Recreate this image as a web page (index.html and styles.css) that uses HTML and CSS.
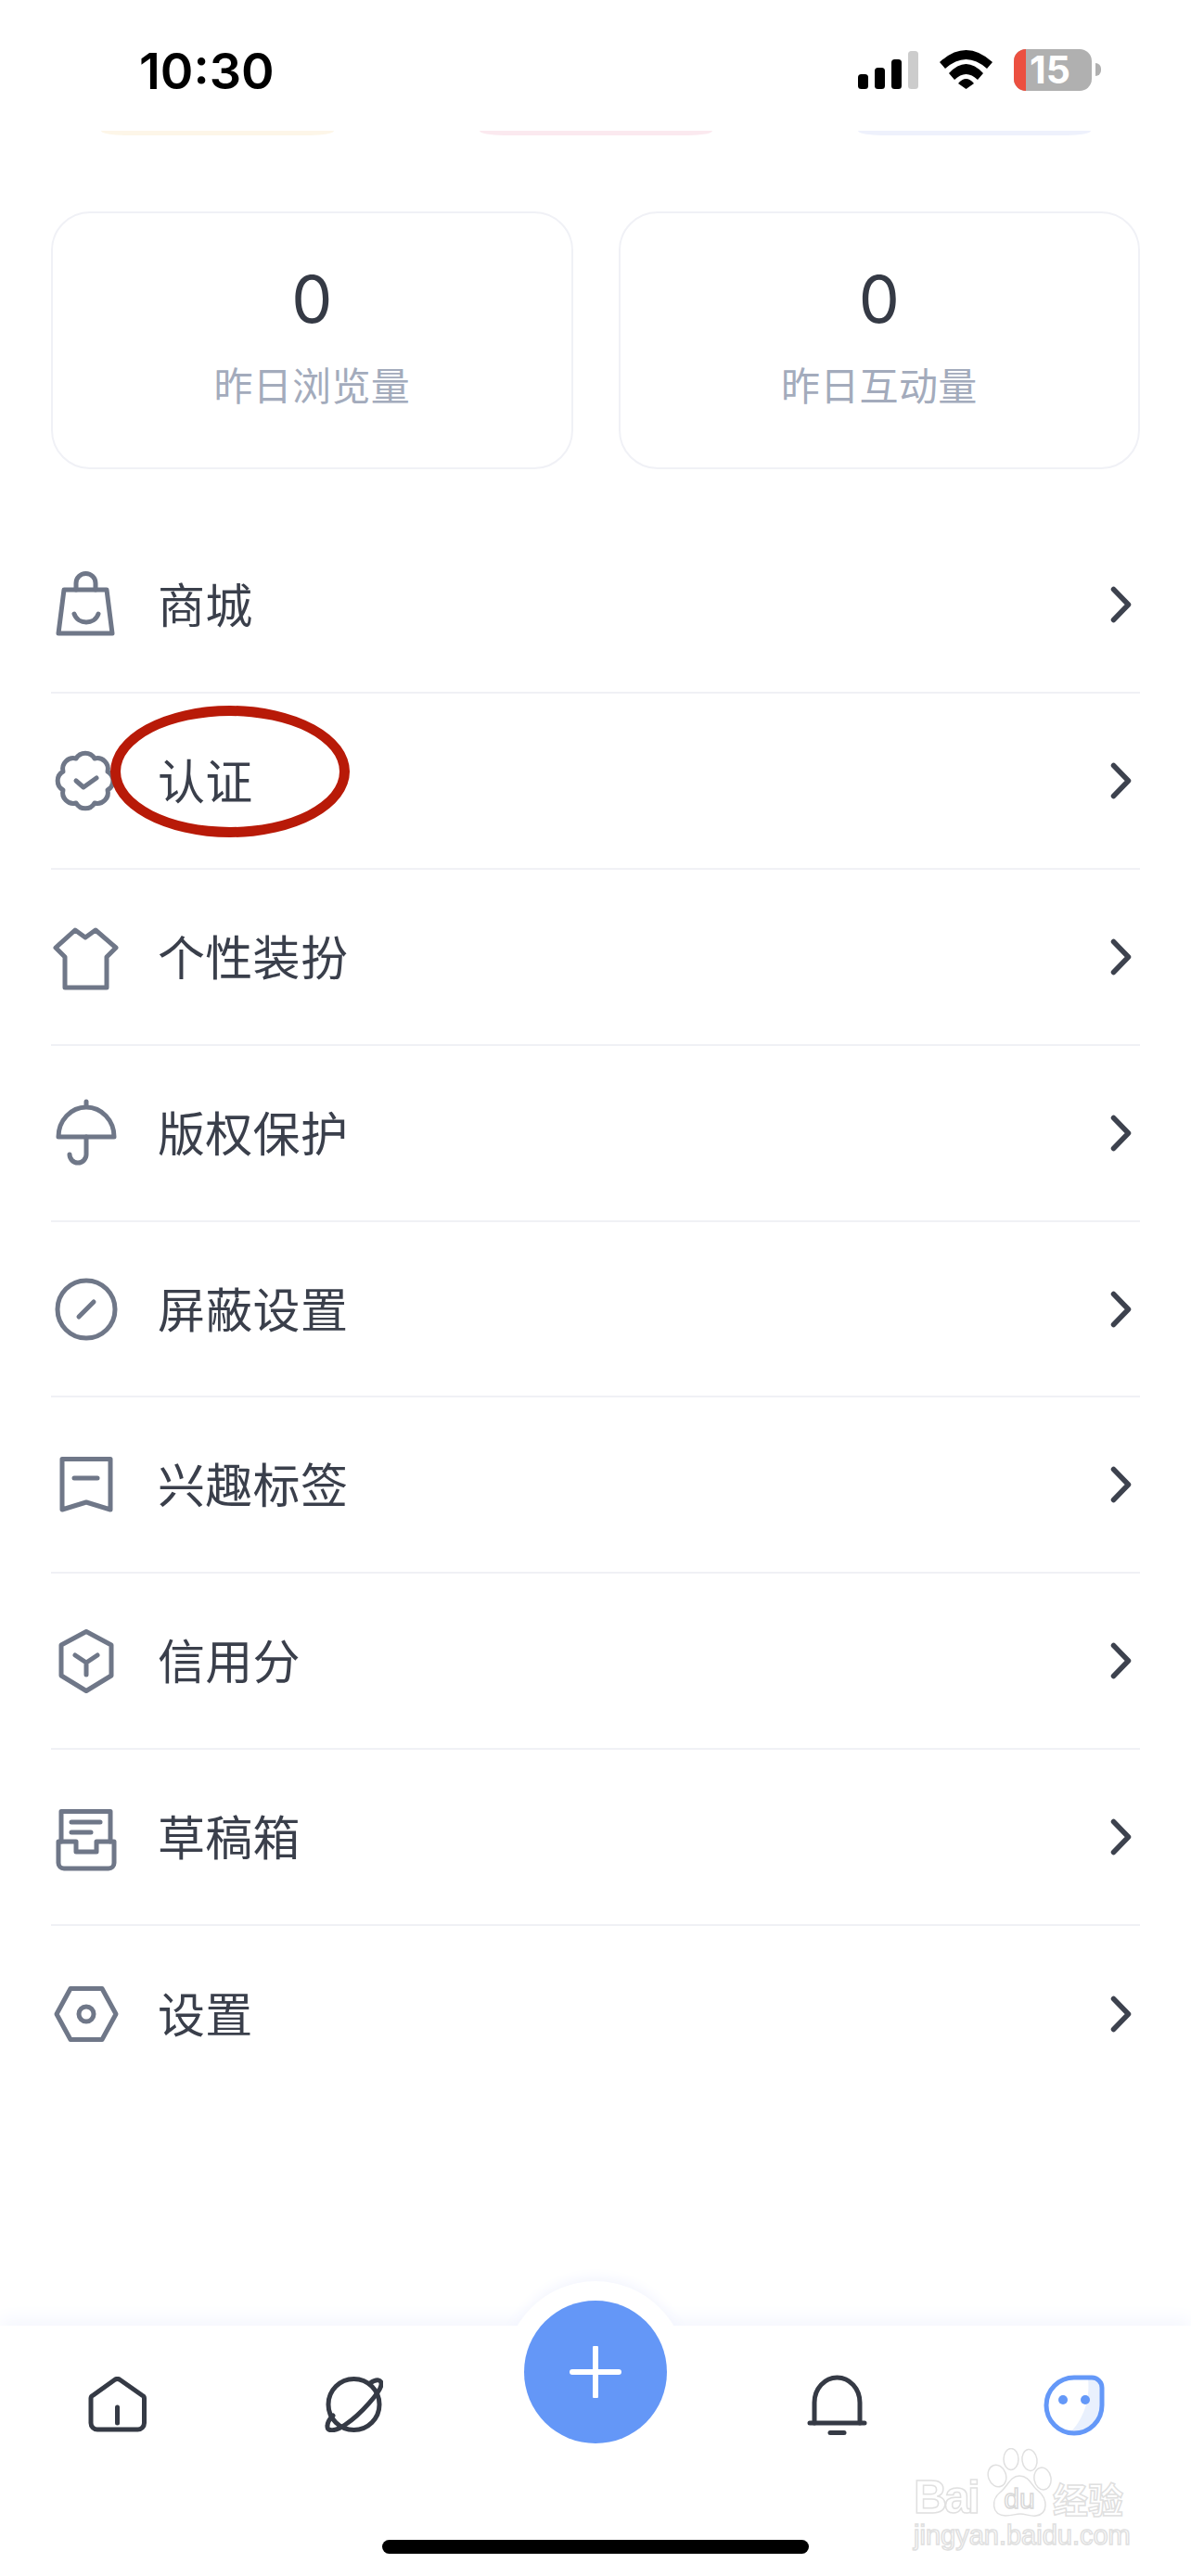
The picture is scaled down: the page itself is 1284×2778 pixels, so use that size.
FILE: index.html
```html
<!DOCTYPE html>
<html lang="zh-CN">
<head>
<meta charset="utf-8">
<title>我的</title>
<link rel="stylesheet" href="styles.css">
</head>
<body>
<div class="page">
  <header class="status">
    <span class="time">10:30</span>
    <div class="status-icons">
      <svg class="signal" width="65" height="41" viewBox="0 0 65 41"><rect x="0" y="25" width="11" height="16" rx="3.5" fill="#000"/><rect x="18" y="18" width="11" height="23" rx="3.5" fill="#000"/><rect x="36" y="9" width="11" height="32" rx="3.5" fill="#000"/><rect x="54" y="0" width="11" height="41" rx="3.5" fill="#ccc"/></svg>
      <svg class="wifi" width="57" height="42" viewBox="0 0 57 42"><path d="M0 13Q28.5 -13 57 13L51 20Q28.5 0 6 20Z" fill="#000"/><path d="M10 25Q28.5 5 47 25L41 32Q28.5 20 16 32Z" fill="#000"/><path d="M20 36Q28.5 26 37 36L28.5 42Z" fill="#000"/></svg>
      <div class="battery"><span class="battery-low"></span><span class="battery-num">15</span></div>
      <span class="battery-nub"></span>
    </div>
  </header>

  <div class="shards">
    <span class="shard shard-yellow"></span>
    <span class="shard shard-pink"></span>
    <span class="shard shard-blue"></span>
  </div>

  <section class="cards">
    <div class="card"><div class="card-num">0</div><div class="card-label">昨日浏览量</div></div>
    <div class="card"><div class="card-num">0</div><div class="card-label">昨日互动量</div></div>
  </section>

  <ul class="menu">
    <li class="row">
      <svg class="ico" viewBox="0 0 74 74"><path d="M14 21H60L66 68H8Z"/><path d="M27 21V14a10.500 10.500 0 0 1 21 0V21"/><path d="M25 47c4 12 22 12 26 0"/></svg>
      <span class="row-text">商城</span>
      <svg class="chev" viewBox="0 0 23 40"><path d="M3.500 3.500L19.500 20L3.500 36.500"/></svg>
    </li>
    <li class="row">
      <svg class="ico" viewBox="0 0 74 74"><path d="M47 13A11.500 11.500 0 0 1 61 27A11.500 11.500 0 0 1 61 47A11.500 11.500 0 0 1 47 61A11.500 11.500 0 0 1 27 61A11.500 11.500 0 0 1 13 47A11.500 11.500 0 0 1 13 27A11.500 11.500 0 0 1 27 13A11.500 11.500 0 0 1 47 13Z"/><path d="M27 37l8 7 14-10"/></svg>
      <span class="row-text">认证</span>
      <svg class="chev" viewBox="0 0 23 40"><path d="M3.500 3.500L19.500 20L3.500 36.500"/></svg>
      <span class="annotation"></span>
    </li>
    <li class="row">
      <svg class="ico" viewBox="0 0 74 74"><path d="M26 8L37 16L48 8L70 27L60 37V70H15V37L5 27Z"/></svg>
      <span class="row-text">个性装扮</span>
      <svg class="chev" viewBox="0 0 23 40"><path d="M3.500 3.500L19.500 20L3.500 36.500"/></svg>
    </li>
    <li class="row">
      <svg class="ico" viewBox="0 0 74 74"><path d="M8 41a30 32 0 0 1 60 0Z"/><path d="M38 3V8"/><path d="M38 41V60a9 9 0 0 1-18 0"/></svg>
      <span class="row-text">版权保护</span>
      <svg class="chev" viewBox="0 0 23 40"><path d="M3.500 3.500L19.500 20L3.500 36.500"/></svg>
    </li>
    <li class="row">
      <svg class="ico" viewBox="0 0 74 74"><circle cx="38" cy="37" r="31"/><path d="M30 45L46 29"/></svg>
      <span class="row-text">屏蔽设置</span>
      <svg class="chev" viewBox="0 0 23 40"><path d="M3.500 3.500L19.500 20L3.500 36.500"/></svg>
    </li>
    <li class="row">
      <svg class="ico" viewBox="0 0 74 74"><path d="M12 9.500H64V64L38 56L12 64Z"/><path d="M25 30H50"/></svg>
      <span class="row-text">兴趣标签</span>
      <svg class="chev" viewBox="0 0 23 40"><path d="M3.500 3.500L19.500 20L3.500 36.500"/></svg>
    </li>
    <li class="row">
      <svg class="ico" viewBox="0 0 74 74"><path d="M38 5.500L65 20V53L38 69.500L11 53V20Z"/><path d="M26 31L38 39L50 31M38 39V52"/></svg>
      <span class="row-text">信用分</span>
      <svg class="chev" viewBox="0 0 23 40"><path d="M3.500 3.500L19.500 20L3.500 36.500"/></svg>
    </li>
    <li class="row">
      <svg class="ico" viewBox="0 0 74 74"><path d="M11 42V9.500H64V42"/><path d="M8 42H27V53H49V42H68V65a6 6 0 0 1-6 6H14a6 6 0 0 1-6-6Z"/><path d="M22 21H53"/><path d="M22 32H43"/></svg>
      <span class="row-text">草稿箱</span>
      <svg class="chev" viewBox="0 0 23 40"><path d="M3.500 3.500L19.500 20L3.500 36.500"/></svg>
    </li>
    <li class="row row-last">
      <svg class="ico" viewBox="0 0 74 74"><path d="M21 9.500H55L70 37L55 64.500H21L6 37Z"/><circle cx="38" cy="37" r="8"/></svg>
      <span class="row-text">设置</span>
      <svg class="chev" viewBox="0 0 23 40"><path d="M3.500 3.500L19.500 20L3.500 36.500"/></svg>
    </li>
  </ul>

  <nav class="nav">
    <span class="fab-halo"></span>
    <span class="fab"><svg width="56" height="56" viewBox="0 0 56 56"><path d="M28 2V54M3 28H53"/></svg></span>
    <div class="nav-items">
      <svg class="nav-ico" width="63" height="60" viewBox="0 0 63 60"><path d="M28.500 3.500a5 5 0 0 1 6 0L58 20a4 4 0 0 1 2.500 4V50a7 7 0 0 1-7 7H10a7 7 0 0 1-7-7V24a4 4 0 0 1 2.500-4Z"/><path d="M31.500 33V50"/></svg>
      <svg class="nav-ico nav-planet" width="63" height="60" viewBox="0 0 63 60"><circle cx="31.500" cy="30" r="27.500"/><path d="M49 7C56 2 62 3 61 9C60 16 40 40 22 52C12 59 2 60 3 53C3 49 6 45 9 42"/></svg>
      <span></span>
      <svg class="nav-ico nav-bell" width="65" height="65" viewBox="0 0 65 65"><path d="M8 52V30a24.500 27 0 0 1 49 0V52"/><path d="M3 52H62"/><path d="M25 62.500H40"/></svg>
      <svg class="nav-face" width="66" height="66" viewBox="0 0 66 66"><path class="face-shade" d="M48 4C50 22 46 44 30 61C48 63 62 50 63 33V14C63 8 55 4 48 4Z"/><path class="face-line" d="M33 3H52a11 11 0 0 1 11 11V33a30 30 0 0 1-60 0a30 30 0 0 1 30-30Z"/><circle class="face-eye" cx="21" cy="27" r="5"/><circle class="face-eye" cx="45" cy="27" r="5"/></svg>
    </div>
    <div class="home-bar"></div>
    <div class="watermark">
      <div class="wm-top">
        <span class="wm-bai">Bai</span>
        <svg class="wm-paw" width="70" height="76" viewBox="0 0 70 76">
          <ellipse cx="11" cy="30" rx="9.500" ry="12" transform="rotate(-20 11 30)"/>
          <ellipse cx="26" cy="12" rx="8" ry="11.500"/>
          <ellipse cx="46" cy="13" rx="8" ry="11.500" transform="rotate(-8 46 13)"/>
          <ellipse cx="60" cy="33" rx="9" ry="12" transform="rotate(-10 60 33)"/>
          <path d="M35 30C25 30 22 42 14 48C5 55 4 72 20 73C28 73 30 71 36 71C42 71 47 74 53 73C66 71 66 55 55 46C48 41 46 30 35 30Z"/>
          <text x="35" y="65" class="wm-du">du</text>
        </svg>
        <span class="wm-cn">经验</span>
      </div>
      <div class="wm-url">jingyan.baidu.com</div>
    </div>
  </nav>
</div>
</body>
</html>
```

FILE: styles.css
```css
* { box-sizing: border-box; }
html, body { margin: 0; padding: 0; background: #fff; }
body { font-family: "Noto Sans CJK SC", "Noto Sans", sans-serif; }
.page { width: 1284px; height: 2778px; display: flex; flex-direction: column; overflow: hidden; position: relative; background: #fff; }

/* status bar */
.status { height: 141px; flex: none; display: flex; justify-content: space-between; align-items: flex-start; padding: 0 97px 0 150px; }
.time { font-family: "Inter", sans-serif; font-weight: 600; font-size: 54px; letter-spacing: 0; line-height: 64px; margin-top: 45px; color: #000; }
.status-icons { display: flex; align-items: flex-start; padding-top: 53px; }
.signal { margin-top: 2px; }
.wifi { margin: 1px 23px 0 23px; }
.battery { width: 84px; height: 45px; border-radius: 13px; background: #b0b0b0; position: relative; display: flex; align-items: center; justify-content: center; }
.battery-low { position: absolute; left: 0; top: 0; bottom: 0; width: 13px; background: #ec5040; border-radius: 13px 0 0 13px; }
.battery-num { font-family: "Inter", sans-serif; font-weight: 700; font-size: 41px; line-height: 45px; color: #fff; margin-left: -6px; position: relative; }
.battery-nub { width: 6px; height: 14px; margin: 15px 0 0 4px; background: #b0b0b0; border-radius: 0 7px 7px 0; }

/* clipped row above the cards */
.shards { height: 5px; flex: none; display: flex; padding-left: 109px; gap: 157px; }
.shard { width: 251px; height: 5px; border-radius: 0 0 26px 26px / 0 0 5px 5px; }
.shard-yellow { background: #fdf6e8; }
.shard-pink { background: #fbe9ef; }
.shard-blue { background: #eef1fc; }

/* stat cards */
.cards { display: flex; gap: 49px; margin: 82px 55px 0; flex: none; }
.card { flex: 1; height: 278px; border: 2px solid #f0f1f6; border-radius: 42px; padding-top: 51px; text-align: center; }
.card-num { font-family: "Inter", sans-serif; font-size: 70px; line-height: 84px; color: #353a45; }
.card-label { font-size: 42px; line-height: 60px; margin-top: 19px; color: #a3abbc; letter-spacing: 0.3px; }

/* menu */
.menu { list-style: none; margin: 52px 55px 0; padding: 0; flex: none; }
.row { height: 189.9px; display: flex; align-items: center; position: relative; border-bottom: 2px solid #f0f1f5; }
.row-last { border-bottom: 0; }
.ico { width: 74px; height: 74px; flex: none; fill: none; stroke: #6f7788; stroke-width: 5; stroke-linejoin: round; stroke-linecap: round; }
.row-text { margin-left: 41px; flex: 1; font-size: 51px; line-height: 70px; color: #3a3f4b; letter-spacing: 0.3px; margin-top: -4px; }
.chev { width: 23px; height: 40px; flex: none; margin-right: 9px; fill: none; stroke: #3d424e; stroke-width: 5.500; stroke-linecap: round; stroke-linejoin: round; }
.annotation { position: absolute; left: 64px; top: 13px; width: 258px; height: 142px; border: 11px solid #b81a08; border-radius: 50%; }

/* bottom navigation */
.nav { margin-top: auto; height: 270px; flex: none; position: relative; background: #fff; box-shadow: 0 -8px 18px #f5f7fe; padding-top: 53px; }
.fab-halo { position: absolute; left: 544px; top: -48px; width: 196px; height: 196px; border-radius: 50%; background: #fff; box-shadow: 0 -4px 14px #f3f5fe; clip-path: inset(-30px -30px 148px -30px); }
.fab { position: absolute; left: 565px; top: -27px; width: 154px; height: 154px; border-radius: 50%; background: #6497f7; display: flex; align-items: center; justify-content: center; }
.fab svg { fill: none; stroke: #fff; stroke-width: 6; stroke-linecap: round; }
.nav-items { display: grid; grid-template-columns: repeat(5, 258px); justify-content: center; justify-items: center; align-items: start; height: 65px; position: relative; }
.nav-ico { fill: none; stroke: #353a45; stroke-width: 5; stroke-linecap: round; stroke-linejoin: round; margin-top: 2px; }
.nav-planet { margin-right: 5px; }
.nav-bell { margin-top: 0; margin-left: 5px; }
.face-line { fill: none; stroke: #6498f8; stroke-width: 5; }
.face-shade { fill: #e9f0fd; }
.face-eye { fill: #6498f8; }
.home-bar { width: 460px; height: 15px; border-radius: 8px; background: #000; margin: 113px auto 0; position: relative; }

/* watermark */
.watermark { position: absolute; left: 985px; top: 132px; width: 232px; font-family: "Liberation Sans", sans-serif; color: #fff; }
.wm-top { display: flex; align-items: flex-end; height: 76px; }
.wm-bai, .wm-cn, .wm-url { -webkit-text-stroke: 1.5px #e0e0e0; }
.wm-bai { font-size: 50px; font-weight: 700; letter-spacing: -3px; line-height: 50px; width: 79px; margin-bottom: -2px; }
.wm-paw { flex: none; fill: #fff; stroke: #e0e0e0; stroke-width: 1.5; }
.wm-du { font-size: 30px; font-family: "Liberation Sans", sans-serif; text-anchor: middle; fill: #fff; stroke: #d8d8d8; }
.wm-cn { font-family: "Noto Sans CJK SC", sans-serif; font-size: 38px; font-weight: 700; line-height: 44px; margin-left: 1px; white-space: nowrap; }
.wm-url { font-size: 29px; line-height: 32px; margin-top: 2px; white-space: nowrap; }
```
